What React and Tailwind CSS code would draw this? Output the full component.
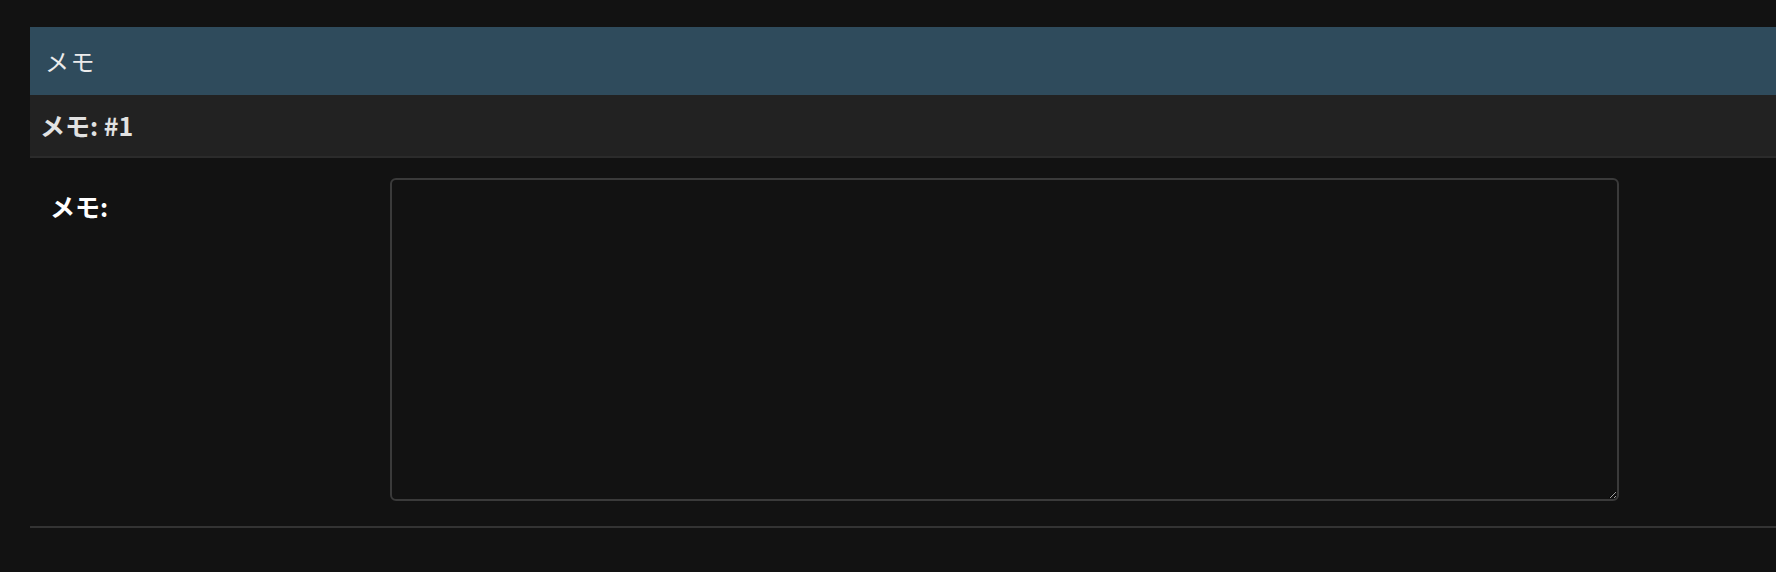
import React from "react";

export default function App() {
  const font = { fontFamily: '"Noto Sans CJK JP", "Noto Sans", sans-serif' };
  return (
    <div className="min-h-screen bg-[#121212] pl-[30px] pt-[27px]" style={font}>
      <div className="h-[68px] bg-[#2f4b5c] flex items-center pl-[15px] text-[24px] text-[#ececec] tracking-[0.06em]">
        メモ
      </div>
      <div className="h-[63px] bg-[#222222] border-b-2 border-[#2b2b2b] flex items-center pl-[10px] text-[25px] font-bold text-[#e2e2e2]">
        メモ: #1
      </div>
      <div className="flex items-start pt-[20px] pb-[25px] border-b-2 border-[#333333]">
        <div className="w-[360px] shrink-0 pl-[20px] pt-[10px] text-[25px] font-bold text-white leading-[1.5]">
          メモ:
        </div>
        <textarea className="w-[1229px] h-[323px] bg-[#121212] border-2 border-[#3a3a3a] rounded-[6px] outline-none text-white p-2"></textarea>
      </div>
    </div>
  );
}
